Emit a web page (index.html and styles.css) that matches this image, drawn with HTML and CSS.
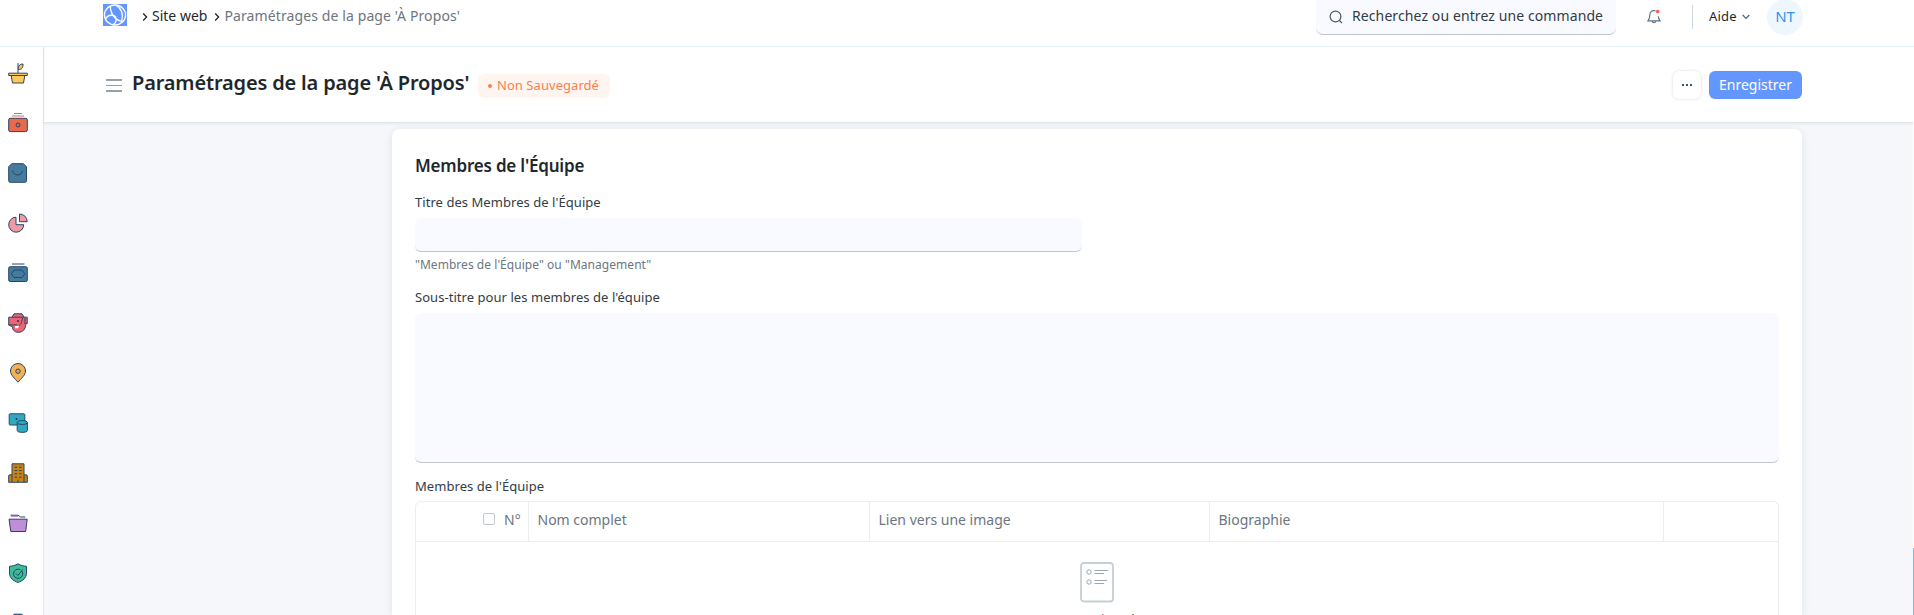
FILE: index.html
```html
<!DOCTYPE html>
<html lang="fr">
<head>
<meta charset="utf-8">
<title>Paramétrages de la page 'À Propos'</title>
<link rel="stylesheet" href="styles.css">
</head>
<body>
<header class="navbar">
  <svg class="logo" width="24" height="22" viewBox="0 0 24 22"><rect width="24" height="22" fill="#6496ff"/><g fill="none" stroke="#fff" stroke-width="1.300"><ellipse cx="12" cy="11" rx="10.600" ry="10"/><path d="M7.500 2C7 9 12 16.500 19.500 17.500M13 1.200C18.500 4.500 20.500 10 18.800 17M2.500 15.500C4.500 9.500 13.500 10 13.200 16 13 18.500 11.500 20 9.500 20.700"/></g></svg>
  <nav class="breadcrumb">
    <svg class="chev" width="6" height="10" viewBox="0 0 6 10"><path d="M1.200 1.500 4.600 5 1.200 8.500"/></svg>
    <a class="crumb">Site web</a>
    <svg class="chev" width="6" height="10" viewBox="0 0 6 10"><path d="M1.200 1.500 4.600 5 1.200 8.500"/></svg>
    <span class="crumb current">Paramétrages de la page 'À Propos'</span>
  </nav>
  <div class="search">
    <svg width="14" height="14" viewBox="0 0 14 14" fill="none" stroke="#4c5a67" stroke-width="1.200"><circle cx="6.500" cy="6.500" r="5.400"/><path d="m10.500 10.500 2.500 2.600"/></svg>
    <span>Recherchez ou entrez une commande</span>
  </div>
  <svg class="bell" width="14" height="16" viewBox="0 0 14 16"><path d="M8.500 1.800C5 .8 2.800 3 2.800 6c0 3-.6 4.200-1.800 5.800h12c-1-1.300-1.600-2.500-1.700-4.600M5.300 12.200c.2 2 3.200 2 3.400 0" fill="none" stroke="#5b7388" stroke-width="1.200"/><circle cx="10.700" cy="2.600" r="1.800" fill="#ff5858"/></svg>
  <div class="divider"></div>
  <div class="help">Aide<svg width="8" height="6" viewBox="0 0 8 6"><path d="M.700 1 4 4.500 7.300 1" fill="none" stroke="#456789" stroke-width="1.200"/></svg></div>
  <div class="avatar">NT</div>
</header>
<div class="shell">
  <aside class="sidebar">
    <div class="app"><svg viewBox="0 0 20 20"><path d="M10 10V0" class="k"/><path d="M10.300 6.500C10 3 12 .8 15 1c.3 3.500-1.300 5.800-4.700 5.500Z" class="s" fill="#f8c14a"/><path d="M3.200 12.500h13.600L15.500 20h-11ZM.7 10.200h18.600v2.300H.7Z" class="s" fill="#ffc95a"/></svg></div>
    <div class="app"><svg viewBox="0 0 20 20"><path d="M6 .5h8" stroke="#e8694b"/><path d="M4 3h12" stroke="#f3b3a2" stroke-width="2"/><rect x=".7" y="5.300" width="18.600" height="13.300" rx="1.500" class="s" fill="#e9694c"/><circle cx="10" cy="12" r="2" class="s" fill="#d96a58"/></svg></div>
    <div class="app"><svg viewBox="0 0 20 20"><path d="M3.700.7h11.600l3.200 3v14q0 1.600-1.600 1.600H2.200Q.7 19.300.7 17.700v-14Z" class="s" fill="#457b9d"/><path d="M4.700 7.700c.5 5.700 9.300 5.700 9.800 0" class="k"/></svg></div>
    <div class="app"><svg viewBox="0 0 20 20"><path d="M8 4.200V11.700h7.700A7.500 7.500 0 1 1 8 4.200Z" class="s" fill="#f09ba4"/><path d="M11.500 1v7.700H19.200A7.700 7.700 0 0 0 11.500 1Z" class="s" fill="#f09ba4"/></svg></div>
    <div class="app"><svg viewBox="0 0 20 20"><path d="M4 1h12.500" class="k"/><rect x=".7" y="3.700" width="18.600" height="14.800" rx="1.500" class="s" fill="#457b9d"/><path d="M6 7h8l2.700 3.800L14 14.500H6l-2.700-3.700Z" class="k"/></svg></div>
    <div class="app"><svg viewBox="0 0 20 20"><path d="M4 4.200 6 .8h8l2.200 3.400h3v6.500h-1.400c0 5.500-3 8.600-7.300 8.600-4.200 0-6-2.500-6-5.500L.7 12V4.200Z" class="s" fill="#ee6471"/><path d="M14.500 5c-1 3.500-.5 5.500-3.500 7.500M.7 12l8.500-.2M17 5v6" class="k"/><path d="M7 13h4l-1 2.300H7Z" fill="#fff"/><circle cx="10" cy="8" r="1" fill="#1d3557"/><path d="M4 4.200h12" class="k"/></svg></div>
    <div class="app"><svg viewBox="0 0 20 20"><path d="M10 19.200C7 15.700 2.500 12 2.500 8A7.500 7.500 0 0 1 17.500 8c0 4-4.500 7.700-7.500 11.200Z" class="s" fill="#f0b255"/><circle cx="10" cy="8.200" r="2.200" class="s" fill="#d8a860"/></svg></div>
    <div class="app"><svg viewBox="0 0 20 20"><rect x="1.200" y=".8" width="15.600" height="11.200" rx="1" class="s" fill="#2ea9bf"/><circle cx="8.500" cy="6" r="1" fill="#1d3557"/><path d="M9.200 9.500v8c0 2.500 10.200 2.500 10.200 0v-8" class="s" fill="#2ea9bf"/><ellipse cx="14.300" cy="9.500" rx="5.100" ry="2" class="s" fill="#2ea9bf"/></svg></div>
    <div class="app"><svg viewBox="0 0 20 20"><path d="M.7 19.300v-6.500q0-1 1-1H4V.8h12v11h2.300q1 0 1 1v6.500Z" class="s" fill="#c98412"/><path d="M4 11.800v7.500M16 11.800v7.500M10 16.500v2.800" class="k"/><path d="M6.500 4.200h2.700M11 4.200h2.700M6.500 7.500h2.700M11 7.500h2.700M6.500 10.800h2.700M11 10.800h2.700M6.500 14.200h2.700M11 14.200h2.700" class="k"/></svg></div>
    <div class="app"><svg viewBox="0 0 20 20"><path d="M2.500 2.200h7.500l2.500 1.800h4.700" class="k"/><path d="M3 3.500h7" stroke="#c08ed8"/><path d="M1 6.200h18.200l-1.500 12.300H2.800Z" class="s" fill="#c08ed8"/></svg></div>
    <div class="app"><svg viewBox="0 0 20 20"><path d="M10 .8c3 1.800 5.500 2.200 8.500 2.500V10c0 5-4 8-8.500 9.400C5.500 18 1.500 15 1.500 10V3.300C4.500 3 7 2.600 10 .8Z" class="s" fill="#3dbb96"/><path d="M13.800 8A4.600 4.600 0 1 1 12.300 6.700M8 10.500l2 2L14.500 6.500" class="k"/></svg></div>
    <div class="app"><svg viewBox="0 0 20 20"><rect x="5.500" y="1.200" width="9" height="18" rx="1" class="s" fill="#457b9d"/></svg></div>
  </aside>
  <div class="page">
    <div class="page-head">
      <div class="burger"><i></i><i></i><i></i></div>
      <h1 class="title">Paramétrages de la page 'À Propos'</h1>
      <span class="pill"><i class="dot"></i>Non Sauvegardé</span>
      <div class="actions">
        <button class="more"><i></i><i></i><i></i></button>
        <button class="save">Enregistrer</button>
      </div>
    </div>
    <main class="content">
      <section class="card">
        <h2 class="section-title">Membres de l'Équipe</h2>
        <label class="label l1">Titre des Membres de l'Équipe</label>
        <div class="field input"></div>
        <p class="hint">"Membres de l'Équipe" ou "Management"</p>
        <label class="label l2">Sous-titre pour les membres de l'équipe</label>
        <div class="field area"></div>
        <label class="label l3">Membres de l'Équipe</label>
        <div class="grid">
          <div class="grid-head">
            <div class="cell num"><span class="check"></span>N°</div>
            <div class="cell">Nom complet</div>
            <div class="cell">Lien vers une image</div>
            <div class="cell">Biographie</div>
            <div class="cell"></div>
          </div>
          <div class="empty">
            <svg width="34" height="41" viewBox="0 0 34 41" fill="none"><rect x="1" y="1" width="32" height="38.500" rx="3" stroke="#c6cfd5" stroke-width="1.800"/><g stroke="#97a9b6" stroke-width="1"><circle cx="9" cy="10" r="2.200"/><circle cx="9" cy="20" r="2.200"/><path d="M14.500 8.500h13.500M14.500 11.500H24M14.500 18.500h12.500M14.500 21.500H24"/></g></svg>
            <span>Aucune donnée</span>
          </div>
        </div>
      </section>
    </main>
  </div>
  <div class="track"><div class="thumb"></div></div>
</div>
</body>
</html>
```
FILE: styles.css
```css
* { box-sizing: border-box; }
body {
  margin: 0;
  height: 615px;
  overflow: hidden;
  font: 14px/20px "Noto Sans", sans-serif;
  color: #1f272e;
  background: #f5f7fb;
}
h1, h2, p { margin: 0; }
svg { display: block; flex: none; }

.navbar {
  display: flex;
  align-items: flex-start;
  height: 47px;
  padding-left: 103px;
  background: #fff;
  border-bottom: 1px solid #e6eff5;
}
.logo { margin-top: 4px; }
.breadcrumb {
  display: flex;
  align-items: center;
  width: 1189px;
  padding: 6px 0 0 15px;
}
.chev { margin-top: 1px; fill: none; stroke: #1f272e; stroke-width: 1.3; }
.crumb { margin: 0 7px 0 4px; }
.crumb.current { margin-right: 0; color: #6c7680; letter-spacing: .11px; }
.search {
  display: flex;
  align-items: flex-start;
  gap: 9px;
  width: 300px;
  height: 35px;
  padding: 6px 0 0 13px;
  border-radius: 0 0 7px 7px;
  background: #f9faff;
  border-bottom: 1px solid #c0c6cc;
  color: #333c44;
  letter-spacing: .1px;
}
.search svg { margin-top: 4px; }
.bell { margin: 9px 0 0 31px; }
.divider { width: 1px; height: 24px; margin: 5px 0 0 31px; background: #d1d8dd; }
.help {
  display: flex;
  align-items: center;
  width: 74px;
  padding: 6px 0 0 16px;
  gap: 5px;
  font-size: 13px;
  letter-spacing: .2px;
}
.help svg { margin-top: 2px; }
.avatar {
  width: 36px;
  height: 36px;
  margin-top: -1px;
  border-radius: 50%;
  background: #eff7fe;
  color: #2e95f2;
  font-size: 15px;
  line-height: 35px;
  text-align: center;
}

.shell { display: flex; height: 568px; overflow: hidden; }
.sidebar {
  flex: none;
  width: 44px;
  padding: 1px 0 0 8px;
  overflow: hidden;
  background: #fff;
  border-right: 1px solid #e2e6ee;
}
.app { display: flex; align-items: center; height: 50px; }
.app svg { width: 20px; height: 20px; overflow: visible; fill: none; }
.s { stroke: #28456a; stroke-width: 1; }
.k { fill: none; stroke: #28456a; stroke-width: 1; }

.page { flex: 1; min-width: 0; }
.page-head {
  display: flex;
  align-items: flex-start;
  height: 76px;
  padding-left: 62px;
  background: #fff;
  border-bottom: 1px solid #e1e4e8;
  box-shadow: 0 1px 3px rgba(30, 40, 60, .07);
}
.burger { display: grid; gap: 4px; width: 16px; margin-top: 32px; }
.burger i { height: 1.5px; background: #98a1a9; }
.title {
  margin: 21px 0 0 10px;
  width: 346px;
  font-size: 20px;
  line-height: 30px;
  font-weight: 600;
  letter-spacing: -.16px;
  white-space: nowrap;
}
.pill {
  display: flex;
  align-items: center;
  width: 132px;
  height: 24px;
  margin-top: 27px;
  padding: 0 0 3px 10px;
  border-radius: 6px;
  background: #fff5f0;
  color: #f8814f;
  font-size: 13px;
  letter-spacing: .05px;
  white-space: nowrap;
}
.dot { width: 4px; height: 4px; margin: 3px 5px 0 0; border-radius: 50%; background: #f8814f; }
.actions { display: flex; gap: 8px; margin: 24px 111px 0 auto; }
.more, .save {
  height: 28px;
  padding: 0;
  border: 0;
  border-radius: 6px;
  font: 14px/28px "Noto Sans", sans-serif;
}
.more {
  display: flex;
  align-items: center;
  justify-content: center;
  gap: 2px;
  width: 28px;
  background: #fff;
  box-shadow: 0 0 3px rgba(30, 40, 60, .18);
}
.more i { width: 2px; height: 2px; background: #3d566e; }
.save { width: 93px; background: #6496ff; color: #fff; }

.content { padding: 6px 111px 0 348px; }
.card {
  height: 486px;
  padding: 27px 23px 0;
  background: #fff;
  border-radius: 8px 8px 0 0;
  box-shadow: 0 2px 8px rgba(30, 40, 60, .1);
}
.section-title { font-size: 17px; line-height: 20px; font-weight: 600; letter-spacing: -.2px; }
.label { display: block; font-size: 13px; line-height: 20px; color: #333c44; letter-spacing: .05px; }
.l1 { margin-top: 16px; }
.field { background: #f9faff; border-bottom: 1px solid #c0c6cc; border-radius: 6px; }
.input { width: 667px; height: 34px; margin-top: 6px; }
.hint { margin-top: 3px; font-size: 12px; line-height: 20px; color: #6c7680; letter-spacing: .04px; }
.l2 { margin-top: 12px; }
.area { height: 150px; margin-top: 6px; }
.l3 { margin-top: 13px; }
.grid {
  height: 114px;
  margin-top: 5px;
  border: 1px solid #ebeef0;
  border-bottom: 0;
  border-radius: 6px 6px 0 0;
}
.grid-head {
  display: grid;
  grid-template-columns: 113px 341px 340px 454px 1fr;
  height: 40px;
  border-bottom: 1px solid #ebeef0;
}
.cell {
  padding: 8px 0 0 8.5px;
  border-right: 1px solid #ebeef0;
  color: #6c7680;
}
.cell:last-child { border-right: 0; }
.num { display: flex; gap: 9px; padding-left: 67px; }
.check { width: 12px; height: 12px; margin-top: 3px; border: 1px solid #c0c6cc; border-radius: 2px; }
.empty {
  display: flex;
  flex-direction: column;
  align-items: center;
  height: 73px;
  padding-top: 20px;
  overflow: hidden;
  font-size: 13px;
  color: #6c7680;
}
.empty span { margin-top: 6px; padding-right: 4px; }

.track { flex: none; width: 1px; background: #fff; padding-top: 501px; }
.thumb { height: 67px; background: #79bde9; }
```
